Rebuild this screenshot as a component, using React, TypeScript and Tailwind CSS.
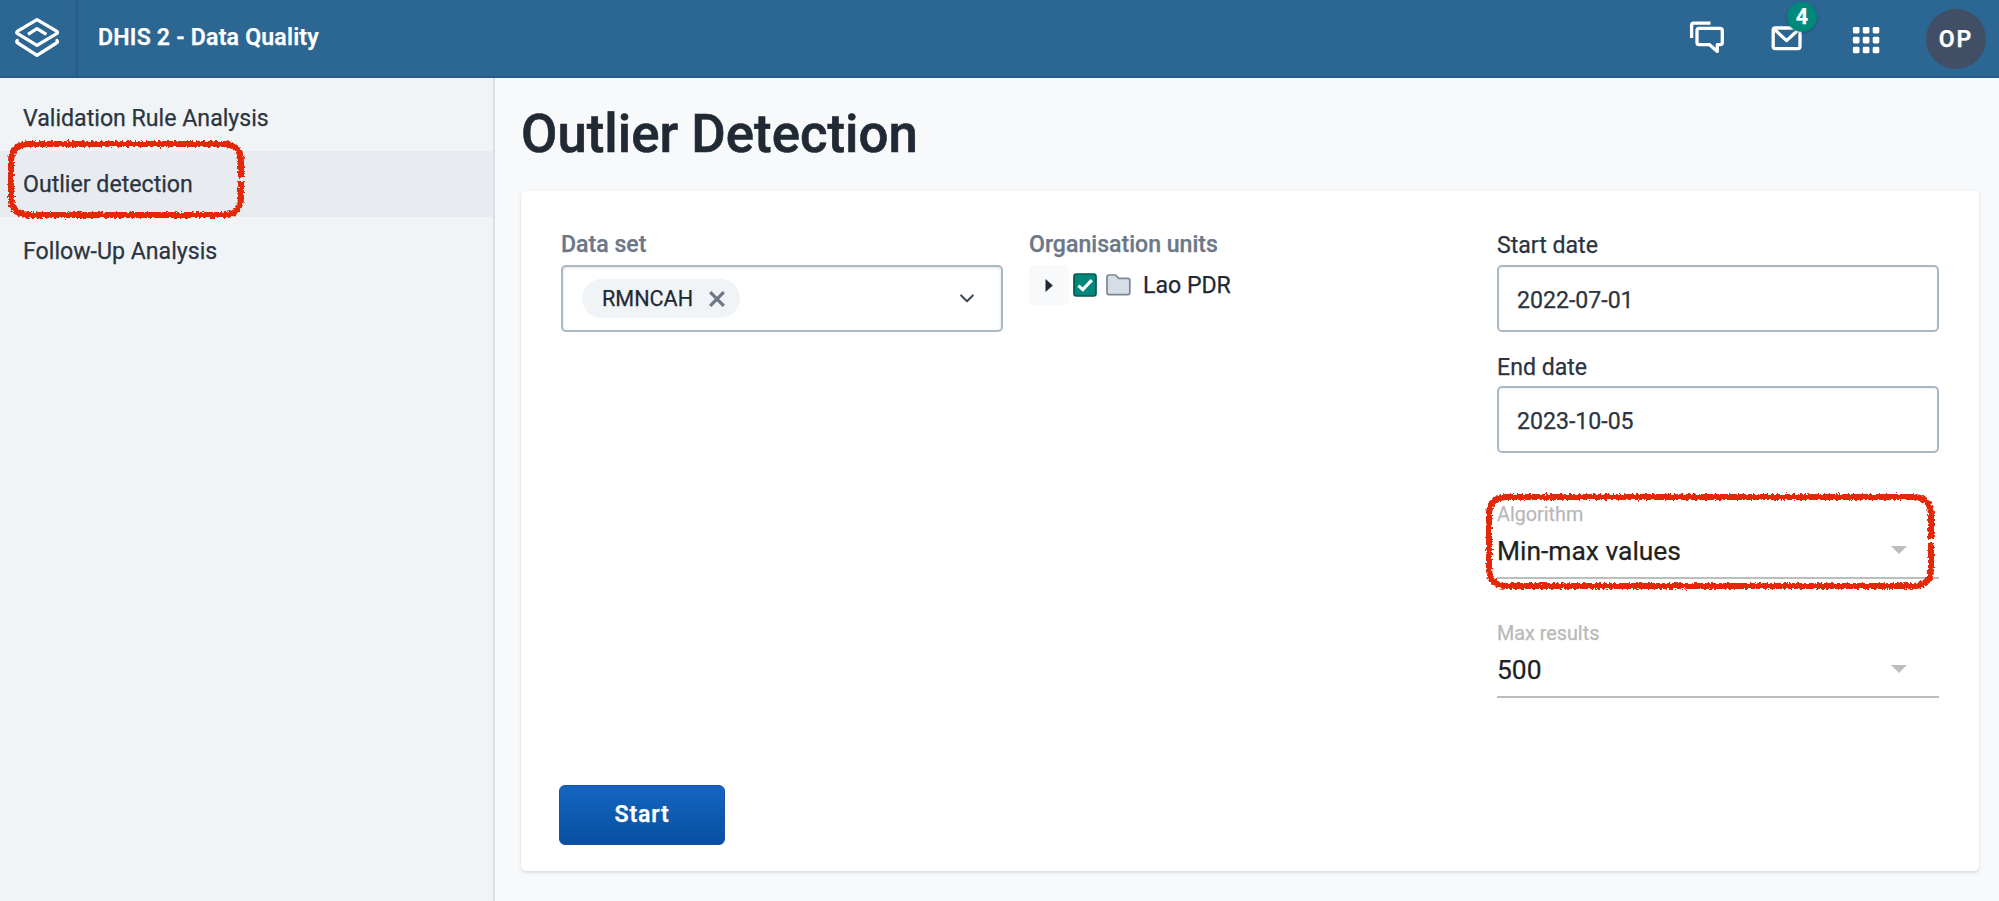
import type { ReactNode } from 'react'

function Sketch({ width, height, gap, id }: { width: number; height: number; gap: number; id: string }) {
  const l = 10
  const t = 10
  const r = width - 10
  const b = height - 10
  const c = 18
  const d = `M${r} ${gap - 1.5}V${t + c}Q${r} ${t} ${r - c} ${t}H${l + c}Q${l} ${t} ${l} ${t + c}V${b - c}Q${l} ${b} ${l + c} ${b}H${r - c}Q${r} ${b} ${r} ${b - c}V${gap + 1.5}`
  return (
    <svg width={width} height={height} viewBox={`0 0 ${width} ${height}`} fill="none">
      <defs>
        <filter id={id} x="0" y="0" width={width} height={height} filterUnits="userSpaceOnUse" colorInterpolationFilters="sRGB">
          <feTurbulence type="fractalNoise" baseFrequency="0.42" numOctaves="2" seed="4" result="n" />
          <feDisplacementMap in="SourceGraphic" in2="n" scale="5" xChannelSelector="R" yChannelSelector="G" />
          <feGaussianBlur stdDeviation="0.4" />
        </filter>
      </defs>
      <path d={d} stroke="#e42807" strokeWidth="6" filter={`url(#${id})`} />
    </svg>
  )
}

function Header() {
  return (
    <header className="flex h-[78px] shrink-0 border-b-2 border-[#285c86] bg-[#2c6693] text-white">
      <div className="flex w-[78px] shrink-0 border-r-2 border-[#285d87] pl-[14px] pt-4">
        <svg width="47" height="43" viewBox="14 16 47 43" fill="none" stroke="#fff" strokeWidth="3.3" strokeLinejoin="round" strokeLinecap="round">
          <path d="M37 19.6 56.6 31.2Q58.4 32.4 56.6 33.6L37 45.4 17.6 33.6Q15.8 32.4 17.6 31.2Z" />
          <path d="M28 34.4 37 28.6 46.4 34.4" strokeLinecap="butt" />
          <path d="M17.2 40.4Q16 42 17.8 43L37 55.4 56.4 43Q58.2 42 57 40.4" />
        </svg>
      </div>
      <h1 className="flex grow items-center pt-px pl-[20px] text-[23.1px] font-semibold tracking-[0.2px]">DHIS 2 - Data Quality</h1>
      <div className="flex">
        <svg className="mt-5 mr-[45px]" width="36" height="36" viewBox="1689 20 36 36" fill="none" stroke="#fff" strokeWidth="3.3" strokeLinejoin="round">
          <path d="M1691.6 38V25.4Q1691.6 23.2 1693.8 23.2H1710.5" />
          <path d="M1699 28.3H1720Q1722.3 28.3 1722.3 30.5V42.4Q1722.3 44.6 1720 44.6H1717.3V51.4L1709.3 44.6H1699Q1697 44.6 1697 42.4V30.5Q1697 28.3 1699 28.3Z" />
        </svg>
        <div className="relative mt-6 mr-[49px] h-[30px] w-[33px]">
          <svg width="33" height="30" viewBox="1770 24 33 30" fill="none" stroke="#fff" strokeWidth="3.3" strokeLinejoin="round">
            <rect x="1773.2" y="28" width="26.8" height="20.6" rx="2" />
            <path d="M1773.8 28.8 1786.6 40.6 1799.4 28.8" />
          </svg>
          <span className="absolute -top-[22px] left-[17px] flex size-[30px] items-center justify-center rounded-full bg-[#00897b] pt-px text-[21.5px] font-bold shadow-[0_1px_3px_rgba(0,0,0,0.25)]">4</span>
        </div>
        <svg className="mt-[25.5px] mr-[46px]" width="28" height="28" viewBox="0 0 28 28" fill="#fff">
          {[0.9, 10.8, 20.7].map((y) => [0.9, 10.8, 20.7].map((x) => <rect key={`${x}-${y}`} x={x} y={y} width="6.6" height="6.6" rx="1.4" />))}
        </svg>
        <div className="mt-[9px] mr-[13px] flex size-[60px] items-center justify-center rounded-full bg-[#404f66] pt-[2px] text-[23.1px] font-semibold tracking-[1.8px]">OP</div>
      </div>
    </header>
  )
}

function Sidebar() {
  return (
    <nav className="flex w-[495px] shrink-0 flex-col border-r-2 border-[#d9e1e8] bg-[#f1f4f7] pt-[7px] text-[23.15px] text-[#2b3440]">
      <a className="flex h-[66px] items-center pt-[2px] pl-[23px]">Validation Rule Analysis</a>
      <a className="relative flex h-[66px] items-center bg-[#e8ecf0] pt-[2px] pl-[23px]">
        Outlier detection
        <span className="pointer-events-none absolute -top-[17.5px] left-px">
          <Sketch id="rough-nav" width={250} height={91} gap={45.5} />
        </span>
      </a>
      <a className="flex h-[67px] items-center pt-[3px] pl-[23px]">Follow-Up Analysis</a>
    </nav>
  )
}

function DateInput({ value }: { value: string }) {
  return (
    <div className="flex h-[67px] items-center rounded-[5px] border-2 border-[#aab8c6] bg-white pt-[6px] pl-[18px] text-[23.1px] text-[#2b3440] shadow-[inset_0_1px_2px_rgba(48,54,60,0.06)]">{value}</div>
  )
}

function FlatSelect({ label, value, children }: { label: string; value: string; children?: ReactNode }) {
  return (
    <div className="relative flex h-[77px] flex-col border-b-2 border-[#bdbdbd]">
      <span className="h-6 text-[19.8px] leading-[26px] text-[#b8b8b8]">{label}</span>
      <div className="flex h-[50px] items-center justify-between pt-[2px] pr-8 text-[26.4px] text-[#212121]">
        {value}
        <svg width="16" height="8" viewBox="0 0 16 8" className="mb-1" fill="#bdbdbd">
          <path d="M0 0H16L8 8Z" />
        </svg>
      </div>
      {children}
    </div>
  )
}

export default function App() {
  return (
    <div className="flex h-[901px] w-[1999px] flex-col overflow-hidden bg-[#f8f9fb] font-[Roboto,sans-serif] [-webkit-text-stroke:0.25px]">
      <Header />
      <div className="flex min-h-0 grow">
        <Sidebar />
        <main className="flex grow flex-col pr-5 pl-[26px]">
          <h2 className="flex h-[113px] items-center pt-px text-[52.8px] font-medium text-[#212934] [-webkit-text-stroke:0.6px]">Outlier Detection</h2>
          <section className="flex h-[680px] flex-col rounded-[5px] bg-white pt-8 pb-[26px] pl-[38px] shadow-[0_1px_4px_rgba(64,75,90,0.12),0_2px_2px_rgba(64,75,90,0.07)]">
            <div className="grid grid-cols-[442px_442px_442px] gap-[26px] pl-[2px]">
              <div className="flex flex-col">
                <label className="flex h-[42px] items-center pt-[2px] text-[23.1px] font-medium text-[#6c7787]">Data set</label>
                <div className="flex h-[67px] items-center justify-between rounded-[5px] border-2 border-[#aab8c6] pr-[27px] pl-[19px] shadow-[inset_0_1px_3px_rgba(48,54,60,0.15)]">
                  <span className="flex h-[39px] w-[158px] items-center justify-between rounded-full bg-[#f1f4f7] pr-[15px] pl-5 text-[21.6px] text-[#212934]">
                    <span className="pt-px">RMNCAH</span>
                    <svg width="16" height="16" viewBox="0 0 16 16" stroke="#6c7787" strokeWidth="3.2">
                      <path d="M1.2 1.2 14.8 14.8M14.8 1.2 1.2 14.8" />
                    </svg>
                  </span>
                  <svg width="14" height="9" viewBox="0 0 14 9" fill="none" stroke="#404b5a" strokeWidth="2.1" strokeLinecap="round" strokeLinejoin="round">
                    <path d="M1.2 1.4 7 7.2 12.8 1.4" />
                  </svg>
                </div>
              </div>
              <div className="flex flex-col">
                <label className="flex h-[42px] items-center pt-[2px] text-[23.1px] font-medium text-[#6c7787]">Organisation units</label>
                <div className="flex h-10 items-center">
                  <span className="flex size-10 items-center justify-center rounded-[4px] bg-[#f8f9fb]">
                    <svg width="8" height="13" viewBox="0 0 8 13" fill="#212934">
                      <path d="M0.5 0 7.8 6.5 0.5 13Z" />
                    </svg>
                  </span>
                  <svg className="ml-1" width="24" height="24" viewBox="0 0 24 24" fill="none">
                    <rect x="1" y="1" width="22" height="22" rx="2.4" fill="#00897b" stroke="#005b50" strokeWidth="1.7" />
                    <path d="M5.4 12.6 9.8 16.6 18.8 7.2" stroke="#fff" strokeWidth="3.2" />
                  </svg>
                  <svg className="ml-[9px]" width="25" height="22" viewBox="0 0 25 22">
                    <path d="M1 3Q1 1 3 1H9.6L12.6 4.4H21.8Q23.8 4.4 23.8 6.4V18.8Q23.8 20.6 22 20.6H2.8Q1 20.6 1 18.8Z" fill="#d5dde5" stroke="#7b8896" strokeWidth="1.7" strokeLinejoin="round" />
                  </svg>
                  <span className="ml-3 pt-[3px] text-[23.1px] text-[#212934]">Lao PDR</span>
                </div>
              </div>
              <div className="flex flex-col">
                <label className="flex h-[42px] items-center pt-[5px] text-[23.1px] text-[#2b3440]">Start date</label>
                <DateInput value="2022-07-01" />
                <label className="flex h-[54px] items-center pt-[18px] text-[23.1px] text-[#2b3440]">End date</label>
                <DateInput value="2023-10-05" />
                <div className="mt-[49px] flex flex-col gap-[42px]">
                  <FlatSelect label="Algorithm" value="Min-max values">
                    <span className="pointer-events-none absolute -top-[15.5px] -left-[18px]">
                      <Sketch id="rough-select" width={462} height={109} gap={53.5} />
                    </span>
                  </FlatSelect>
                  <FlatSelect label="Max results" value="500" />
                </div>
              </div>
            </div>
            <button className="mt-auto flex h-[60px] w-[166px] items-center justify-center rounded-[6px] border border-[#1a4fa3] bg-linear-to-b from-[#1565c0] to-[#0650a3] pt-px text-[23.1px] font-semibold tracking-[0.8px] text-white">Start</button>
          </section>
        </main>
      </div>
    </div>
  )
}
